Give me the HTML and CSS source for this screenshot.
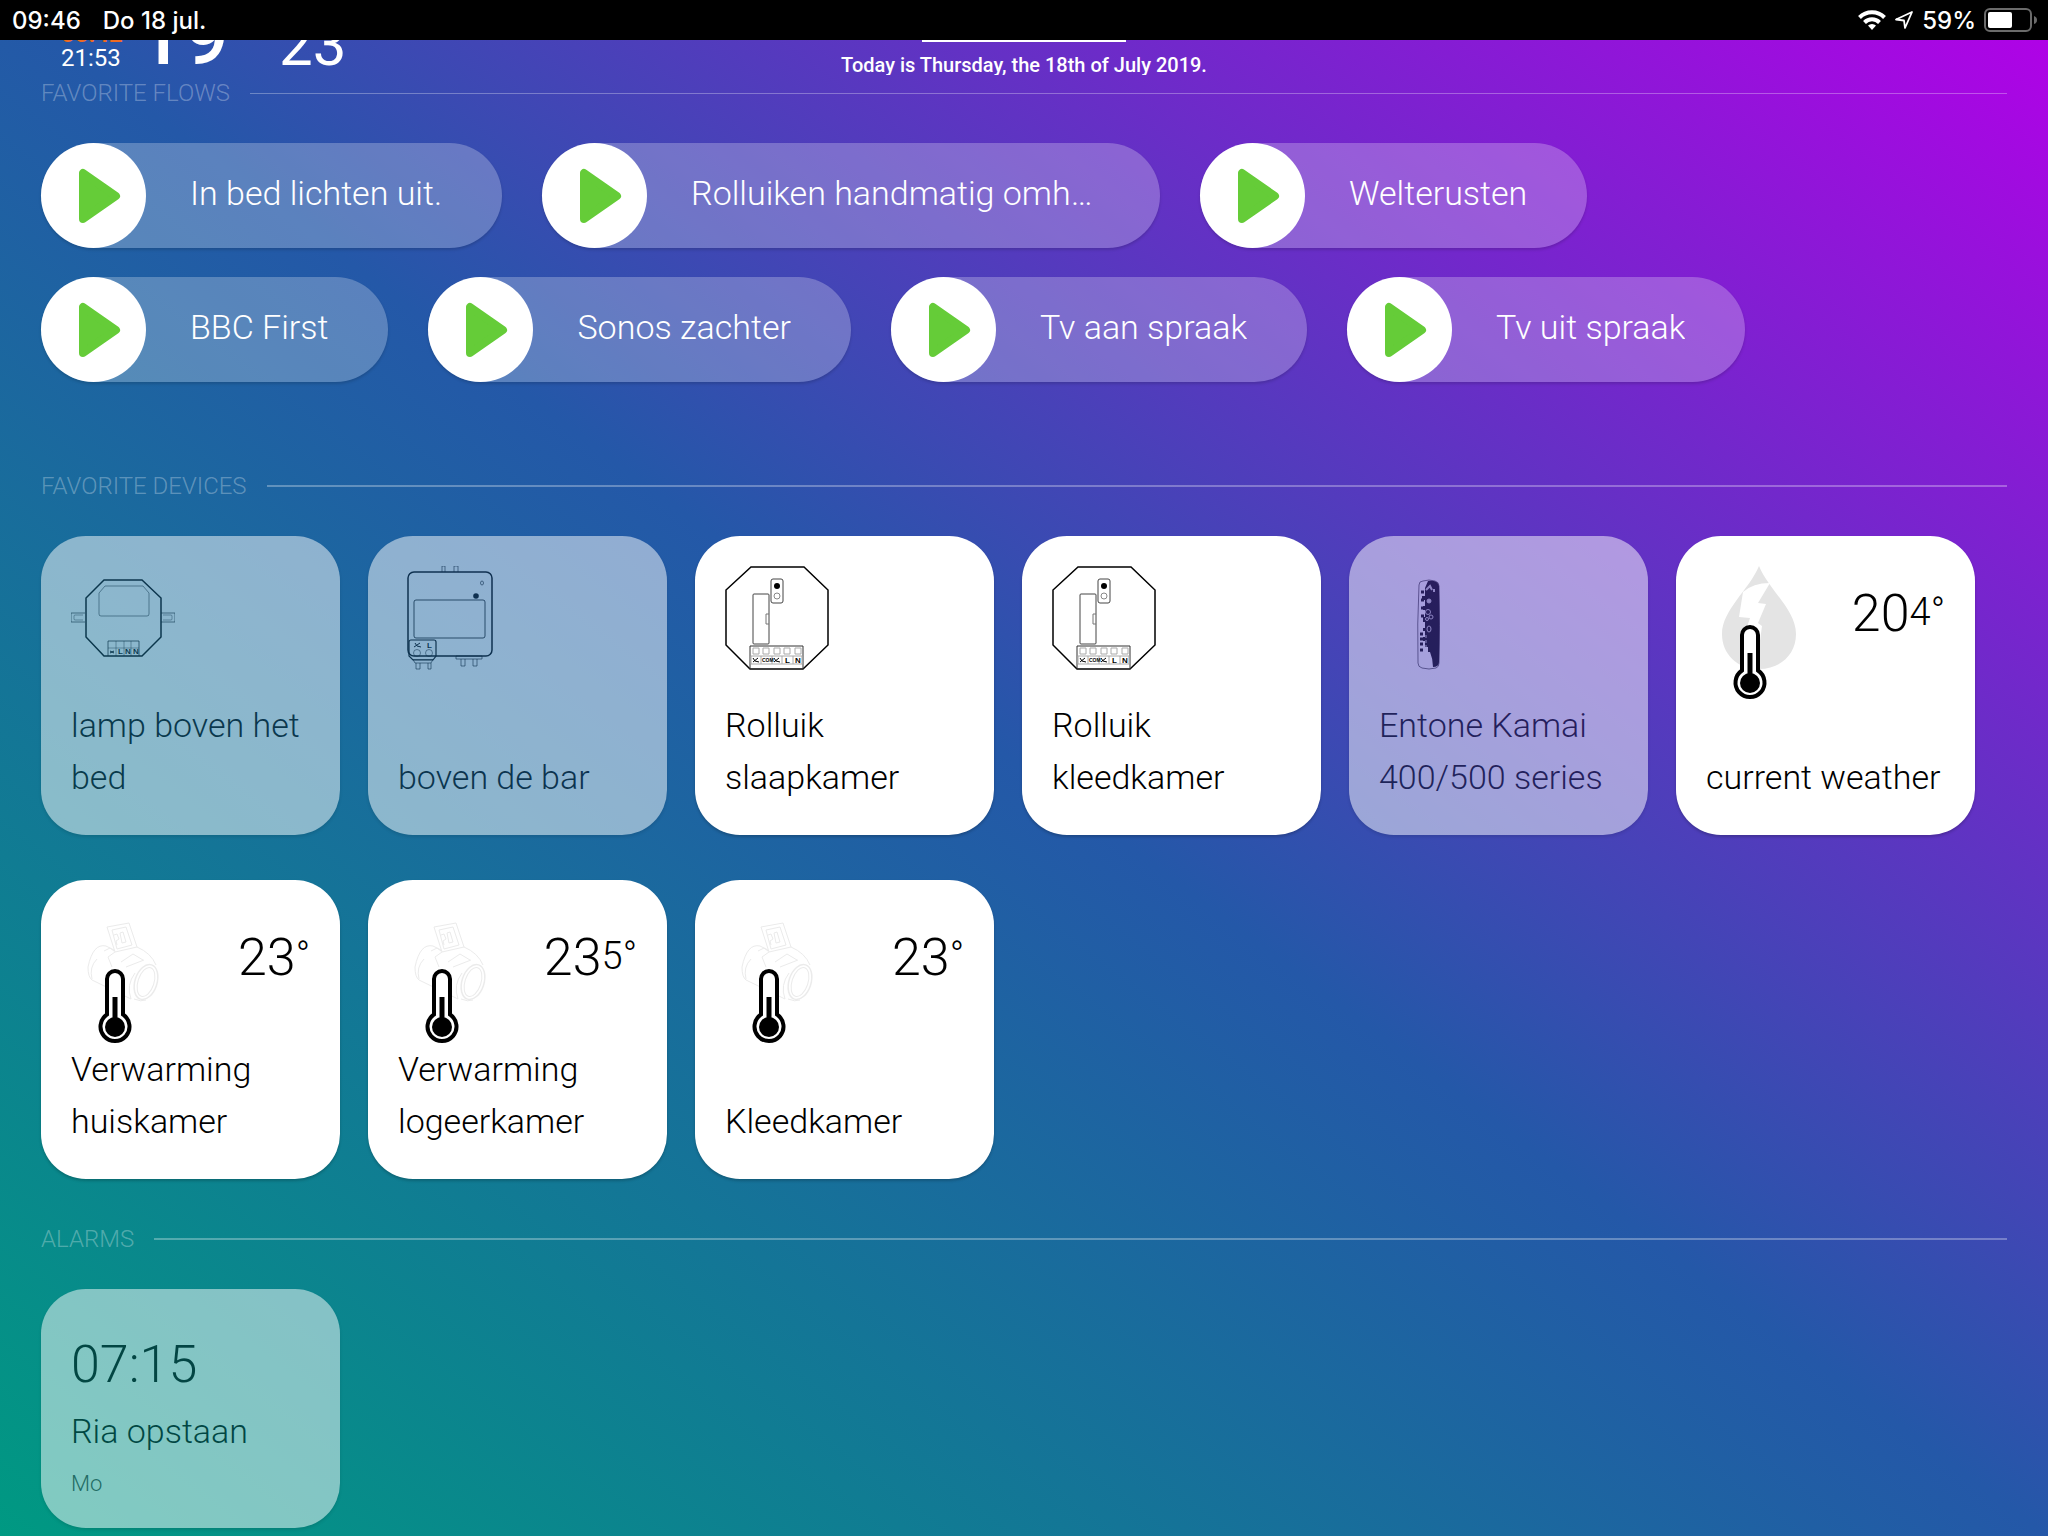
FILE: index.html
```
<!DOCTYPE html>
<html lang="nl">

<head>
<meta charset="UTF-8">
<meta name="viewport" content="width=device-width, initial-scale=1">
<title>Dashboard</title>
<link rel="stylesheet" href="styles.css">
</head>

<body>

<svg class="sprites" aria-hidden="true">
<symbol id="play" viewBox="0 0 105 105">
<path d="M42 30v46l33-23z" fill="#65cc38" stroke="#65cc38" stroke-width="8" stroke-linejoin="round"/>
</symbol>
<symbol id="dimmer" viewBox="0 0 104 136">
<g fill="none" stroke="#000">
<path d="M14 47H0v9h14M90 47h14v9H90" opacity=".6"/>
<path d="M12 49H4q-1 0-1 1v3q0 1 1 1h8M92 49h8q1 0 1 1v3q0 1-1 1h-8" opacity=".4"/>
<path d="M33 14h38l19 18v39L71 90H33L15 71V32z" stroke-width="1.500"/>
<path d="M34 20h38l6 7v21q0 2-2 2H30q-2 0-2-2V27z" opacity=".5"/>
<path d="M37 90V75h31v15" opacity=".7"/>
<path d="M37 82h31M45 75v15M53 75v15M60 75v15" opacity=".4"/>
<path d="M39 87l4-2M39 85l4 2"/>
</g>
<g class="pins"><text x="47" y="88">L</text><text x="54" y="88">N</text><text x="62" y="88">N</text></g>
</symbol>
<symbol id="module" viewBox="0 0 104 136">
<g fill="none" stroke="#000">
<path d="M44 6V0h3v6M56 6V0h4v6" opacity=".6"/>
<path d="M15 93.500h20l-2 3.500H17zM18 97v6h4v-6M30 97v6h3v-6M58 90h26v3H58zM63 93v7h4v-7M75 93v7h4v-7" opacity=".6"/>
<rect x="10" y="6" width="84" height="84" rx="6" stroke-width="1.500"/>
<rect x="16" y="34" width="71" height="38" rx="2" opacity=".8"/>
<path d="M11 76q0-2 2-2h23q2 0 2 2v14l-3 4H15l-4-4z" stroke-width="1.200"/>
<circle cx="19" cy="87" r="3.500" opacity=".5"/><circle cx="31" cy="87" r="3.500" opacity=".5"/>
<ellipse cx="84" cy="17" rx="1.500" ry="2" opacity=".6"/>
<path d="M16 81l6-4M17 77l2 3 4 1"/>
</g>
<circle cx="78" cy="30" r="2.800"/>
<g class="pins"><text x="29" y="82">L</text></g>
</symbol>
<symbol id="shutter" viewBox="0 0 104 136">
<g fill="none" stroke="#000">
<path d="M26 1h53l24 23v55l-25 24H25L1 79V24z" stroke-width="1.500"/>
<rect x="46" y="13" width="12" height="24" rx="2" stroke="#444"/>
<circle cx="52" cy="30" r="3" stroke="#888"/>
<rect x="28" y="28" width="16" height="50" rx="1" stroke="#444"/>
<path d="M44 48h-3v10h3" stroke="#777"/>
<path d="M25 103V80h53v23" stroke="#333"/>
<path d="M28 82h6v6h-6zM38 82h6v6h-6zM49 82h6v6h-6zM59 82h6v6h-6zM70 82h6v6h-6zM26 90h51v8H26zM36 90v8M47 90v8M57 90v8M68 90v8" stroke="#aaa"/>
<path d="M28 96l5-4M28 92l2 3 4 1M49 96l5-4M49 92l2 3 4 1"/>
</g>
<circle cx="52" cy="20" r="3"/>
<g class="pins"><text class="com" x="37" y="96">COM</text><text x="60" y="97">L</text><text x="70" y="97">N</text></g>
</symbol>
<symbol id="remote" viewBox="0 0 104 136">
<path d="M40 19q0-4 4-4 6-2 12 0 4 1 4 5 1 40 0 77 0 4-3 5-7 2-14 0-4-1-4-5-1-39 1-78z" fill="none" stroke="#000" opacity=".6"/>
<path d="M49 15q10-1 11 5 1 40 0 76 0 5-6 5 0-8-3-15h-2v-5h-3v-6h-2v-4h2v-6h-2v-3h2v-6h-2v-5h2v-7h-2v-4h2v-6h-3v-4h3v-8z"/>
<path d="M42 26h3M42 34h3M42 42h3M42 50h3M41 68h3M41 73h3M41 78h3M41 84h3" stroke="#000" stroke-width="3"/>
<g fill="none" stroke="#fff" opacity=".8">
<path d="M47 24l4-4 2 4M55 26v-3" stroke-width="2"/>
<circle cx="50" cy="35" r="2" fill="#fff"/>
<circle cx="49" cy="46" r="2.500"/><circle cx="52" cy="51" r="2"/><circle cx="48" cy="53" r="1.500"/>
<ellipse cx="50" cy="63" rx="2" ry="3"/>
<path d="M47 69v16" stroke-dasharray="3 2"/>
</g>
</symbol>
<symbol id="thermometer" viewBox="0 0 104 136">
<path d="M36 69a8 8 0 0 1 16 0v35.500a14.500 14.500 0 1 1-16 0z" fill="#fff" stroke="#000" stroke-width="4"/>
<circle cx="44" cy="117" r="10"/><path d="M41.500 87h5v24h-5z"/>
</symbol>
<symbol id="weather" viewBox="0 0 104 136">
<path d="M53 0C63 24 90 44 90 68c0 20-15 35-37 35S16 88 16 68C16 44 43 24 53 0z" fill="#e4e4e4"/>
<path d="M37 26q10-9 27-9L52 37l8 1-8 19 4 3-5 37-10-36 3-9-11-1z" fill="#fff"/>
<use href="#thermometer"/>
</symbol>
<symbol id="valve" viewBox="0 0 104 136">
<g fill="none" stroke="#ebebeb">
<path d="M36 17l22-4 8 24-22 5zM41 20l14-3 6 18-15 4z"/>
<path d="M43 25l3-1 2 5-3 2 1 4M49 23l3-1 3 10-4 1z"/>
<path d="M35 36q-13-3-18 21 0 10 4 13l39 19M35 36l8 4M33 41l6-3 4 3M66 37q14 6 19 18M44 42l-7 5 4 10M26 49q-8 8-5 20M50 52l12-8 10 6M55 57l18-7"/>
<ellipse cx="75" cy="72" rx="11" ry="18" transform="rotate(18 75 72)" stroke-width="1.500"/>
<ellipse cx="75" cy="72" rx="8" ry="15" transform="rotate(18 75 72)"/>
<path d="M63 89q7 3 12 1M64 63q-9 12-4 26"/>
</g>
<use href="#thermometer"/>
</symbol>
</svg>

<div class="statusbar">
<span>09:46</span>
<span>Do 18 jul.</span>
<div class="system">
<svg width="28" height="22" viewBox="0 0 28 22" aria-hidden="true"><g fill="none" stroke="#fff" stroke-width="4"><path d="M1.500 8.500a17.500 17.500 0 0 1 25 0"/><path d="M6.500 13.500a10.500 10.500 0 0 1 15 0"/></g><path d="M14 21l-4-4.500a5.800 5.800 0 0 1 8 0z" fill="#fff"/></svg>
<svg width="20" height="20" viewBox="0 0 20 20" aria-hidden="true"><path d="M18 2L2 9.500l8 1 1 7.500z" fill="none" stroke="#fff" stroke-width="1.800" stroke-linejoin="round"/></svg>
<span>59%</span>
<svg width="54" height="24" viewBox="0 0 54 24" aria-hidden="true"><rect x="1" y="1" width="46" height="22" rx="5" fill="none" stroke="#6b6b6b" stroke-width="2"/><rect x="4" y="4" width="24" height="16" rx="2" fill="#fff"/><path d="M50 8q3 1 3 4t-3 4z" fill="#6b6b6b"/></svg>
</div>
</div>

<div class="dashboard">

<div class="summary">
<div class="readings">
<div class="sun"><div class="sunrise">05:42</div><div>21:53</div></div>
<div class="outside">19</div>
<div class="inside">23</div>
</div>
<div class="today">Today is Thursday, the 18th of July 2019.</div>
</div>

<section class="flows">
<h2>Favorite flows</h2>
<div class="flow-list">
<button class="flow"><svg><use href="#play"/></svg><span>In bed lichten uit.</span></button>
<button class="flow"><svg><use href="#play"/></svg><span>Rolluiken handmatig omhoog</span></button>
<button class="flow"><svg><use href="#play"/></svg><span>Welterusten</span></button>
<button class="flow"><svg><use href="#play"/></svg><span>BBC First</span></button>
<button class="flow"><svg><use href="#play"/></svg><span>Sonos zachter</span></button>
<button class="flow"><svg><use href="#play"/></svg><span>Tv aan spraak</span></button>
<button class="flow"><svg><use href="#play"/></svg><span>Tv uit spraak</span></button>
</div>
</section>

<section class="devices">
<h2>Favorite devices</h2>
<div class="card-list">
<div class="card off"><div class="top"><svg><use href="#dimmer"/></svg></div><div class="name">lamp boven het bed</div></div>
<div class="card off"><div class="top"><svg><use href="#module"/></svg></div><div class="name">boven de bar</div></div>
<div class="card"><div class="top"><svg><use href="#shutter"/></svg></div><div class="name">Rolluik slaapkamer</div></div>
<div class="card"><div class="top"><svg><use href="#shutter"/></svg></div><div class="name">Rolluik kleedkamer</div></div>
<div class="card off"><div class="top"><svg><use href="#remote"/></svg></div><div class="name">Entone Kamai 400/500 series</div></div>
<div class="card"><div class="top"><svg><use href="#weather"/></svg><div class="temp">20<span>4°</span></div></div><div class="name">current weather</div></div>
<div class="card"><div class="top"><svg><use href="#valve"/></svg><div class="temp">23<span>°</span></div></div><div class="name">Verwarming huiskamer</div></div>
<div class="card"><div class="top"><svg><use href="#valve"/></svg><div class="temp">23<span>5°</span></div></div><div class="name">Verwarming logeerkamer</div></div>
<div class="card"><div class="top"><svg><use href="#valve"/></svg><div class="temp">23<span>°</span></div></div><div class="name">Kleedkamer</div></div>
</div>
</section>

<section class="alarms">
<h2>Alarms</h2>
<div class="card-list">
<div class="card off alarm">
<div class="time">07:15</div>
<div class="name">Ria opstaan</div>
<div class="days">Mo</div>
</div>
</div>
</section>

</div>

</body>
</html>
```
FILE: styles.css
```
* {
   box-sizing: border-box;
}
body {
   margin: 0;
   min-height: 100vh;
   font-family: Roboto, sans-serif;
   font-weight: 300;
   color: white;
   background: linear-gradient(to top right, #009982, #2458a8, #b300e8);
}
.sprites {
   display: none;
}
.statusbar {
   display: flex;
   align-items: center;
   gap: 22px;
   height: 40px;
   padding: 0 10px 0 12px;
   background: black;
   font-family: Inter, sans-serif;
   font-size: 24px;
   font-weight: 500;
}
.system {
   display: flex;
   align-items: center;
   gap: 8px;
   margin-left: auto;
}
.dashboard {
   padding: 0 41px;
}

/* tail of the scrolled header */
.summary {
   display: grid;
   grid-template-columns: 1fr auto 1fr;
   align-items: end;
   height: 35px;
   overflow: hidden;
}
.readings {
   display: flex;
   align-items: flex-end;
   height: 35px;
   padding-left: 20px;
   font-weight: 400;
}
.sun {
   width: 60px;
   font-size: 24px;
   line-height: 24px;
   padding-bottom: 5px;
}
.sunrise {
   color: #ee6a22;
   font-weight: 700;
}
.outside {
   margin-left: 17px;
   font-size: 80px;
   font-weight: 500;
   line-height: 75px;
}
.inside {
   margin-left: 50px;
   font-size: 60px;
   line-height: 61px;
}
.today {
   position: relative;
   height: 35px;
   font-size: 20px;
   font-weight: 500;
   line-height: 50px;
}
.today::before {
   content: "";
   position: absolute;
   top: 0;
   left: 50%;
   width: 204px;
   height: 2px;
   margin-left: -102px;
   background: white;
}

h2 {
   display: flex;
   align-items: center;
   gap: 20px;
   margin: 0 0 32px;
   font-size: 24px;
   font-weight: 300;
   line-height: 36px;
   text-transform: uppercase;
   color: rgba(255, 255, 255, 0.3);
}
h2::after {
   content: "";
   flex: 1;
   height: 2px;
   background: rgba(255, 255, 255, 0.3);
}
.flows h2::after {
   height: 1px;
}
.flow-list {
   display: flex;
   flex-wrap: wrap;
   row-gap: 29px;
}
.flow {
   display: flex;
   align-items: center;
   height: 105px;
   margin: 0 40px 0 0;
   padding: 0 60px 0 0;
   border: 0;
   border-radius: 53px;
   background: rgba(255, 255, 255, 0.25);
   box-shadow: 0 2px 3px rgba(0, 0, 0, 0.15);
   color: white;
   font-family: inherit;
   font-size: 34px;
   font-weight: 300;
   line-height: 52px;
}
.flow svg {
   width: 105px;
   height: 105px;
   border-radius: 50%;
   background: white;
}
.flow span {
   max-width: 409px;
   margin-left: 44px;
   padding-bottom: 6px;
   overflow: hidden;
   text-overflow: ellipsis;
   white-space: nowrap;
}
.devices {
   margin-top: 86px;
}
.alarms {
   margin-top: 42px;
}
.card-list {
   display: grid;
   grid-template-columns: repeat(auto-fill, 299px);
   gap: 45px 28px;
}
.card {
   display: flex;
   flex-direction: column;
   justify-content: space-between;
   height: 299px;
   padding: 30px 30px 32px;
   border-radius: 45px;
   background: white;
   box-shadow: 0 2px 3px rgba(0, 0, 0, 0.2);
   color: black;
}
.off {
   opacity: 0.5;
}
.top {
   display: flex;
   justify-content: space-between;
   height: 104px;
}
.top svg {
   width: 104px;
   height: 136px;
}
.temp {
   padding-top: 18px;
   font-size: 52px;
   line-height: 60px;
}
.temp span {
   font-size: 38px;
   line-height: 38px;
   vertical-align: 6px;
}
.name {
   font-size: 34px;
   line-height: 52px;
}
.pins {
   font-family: "Liberation Sans", sans-serif;
   font-size: 8px;
   font-weight: 700;
}
.com {
   font-size: 5px;
}
.alarm {
   height: 239px;
   padding: 46px 30px 26px;
}
.time {
   font-size: 52px;
   line-height: 60px;
}
.days {
   font-size: 22px;
   line-height: 36px;
   color: #444;
}
```
